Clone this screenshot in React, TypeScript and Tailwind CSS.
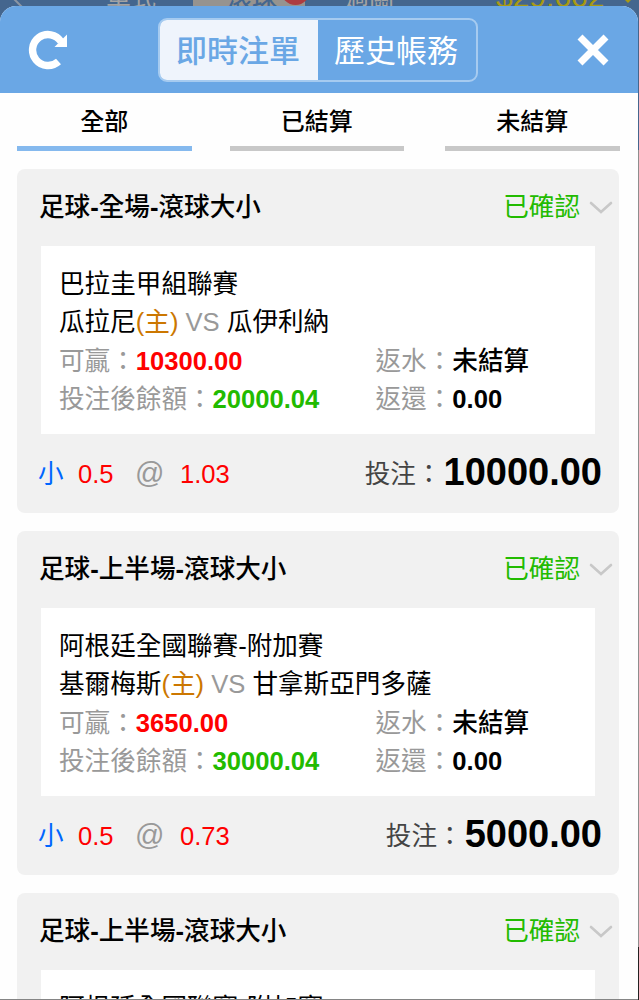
import { useState } from "react";

type Bet = {
  title: string;
  league: string;
  home: string;
  away: string;
  win: string;
  balance: string;
  odds: string;
  stake: string;
};

const bets: Bet[] = [
  { title: "足球-全場-滾球大小", league: "巴拉圭甲組聯賽", home: "瓜拉尼", away: "瓜伊利納", win: "10300.00", balance: "20000.04", odds: "1.03", stake: "10000.00" },
  { title: "足球-上半場-滾球大小", league: "阿根廷全國聯賽-附加賽", home: "基爾梅斯", away: "甘拿斯亞門多薩", win: "3650.00", balance: "30000.04", odds: "0.73", stake: "5000.00" },
  { title: "足球-上半場-滾球大小", league: "阿根廷全國聯賽-附加賽", home: "基爾梅斯", away: "甘拿斯亞門多薩", win: "3650.00", balance: "30000.04", odds: "0.73", stake: "5000.00" },
];

const tabs = ["全部", "已結算", "未結算"];

function Backdrop() {
  return (
    <div className="absolute inset-0 flex flex-col bg-[#8e8e8e]">
      <div className="relative h-[150px] shrink-0 overflow-hidden bg-[#44668e] text-[25px] leading-[30px] text-[#a3a3a3]">
        <svg className="absolute left-[12px] top-0 h-[6px] w-[12px]" viewBox="0 0 12 6" stroke="#8c96a3" strokeWidth="2">
          <path d="M2 -1 L10 7" />
        </svg>
        <span className="absolute left-[106px] top-[-17px]">單式</span>
        <span className="absolute left-[193px] top-[-10px] h-[40px] w-[112px] bg-[#96938f]" />
        <span className="absolute left-[227px] top-[-17px] font-medium text-[#44668e]">滾球</span>
        <span className="absolute left-[281px] top-[-24px] h-[29px] w-[29px] rounded-full bg-[#ad3c40]" />
        <span className="absolute left-[344px] top-[-17px]">過關</span>
        <span className="absolute left-[496px] top-[-18px] text-[30px] text-[#a99a12]">$29,662</span>
        <svg className="absolute left-[624px] top-0 h-[4px] w-[8px]" viewBox="0 0 8 4" fill="#a99a12">
          <path d="M1 0 H7 L4 3 Z" />
        </svg>
      </div>
      <div className="flex-1" />
      <div className="h-[53px] bg-[#222]" />
    </div>
  );
}

// the dashes are heavier than the text around them
function Title({ text }: { text: string }) {
  return (
    <p className="font-medium">
      {text.split("-").map((part, i) => (
        <span key={i}>{i > 0 && <b>-</b>}{part}</span>
      ))}
    </p>
  );
}

function BetCard({ bet }: { bet: Bet }) {
  return (
    <div className="h-[344.5px] shrink-0 rounded-[8px] bg-[#f1f1f1] px-[24px]">
      <div className="-ml-[2px] -mr-[18px] flex h-[77px] items-center justify-between">
        <Title text={bet.title} />
        <div className="flex items-center gap-[9px] text-[#22bb00]">
          <span>已確認</span>
          <svg className="h-[14px] w-[24px]" viewBox="0 0 24 14" fill="none" stroke="#c8c8c8" strokeWidth="2.6" strokeLinecap="round">
            <path d="M2 3 L12 12 L22 3" />
          </svg>
        </div>
      </div>

      <div className="h-[188.5px] bg-white px-[18px] pt-[19.5px] leading-[38.4px]">
        <p>{bet.league}</p>
        <p>
          {bet.home}
          <span className="text-[#cc7700]">(主)</span>
          <span className="text-[#999]"> VS </span>
          {bet.away}
        </p>
        <div className="flex text-[#999]">
          <p className="w-[316.5px]">可贏：<b className="text-[#ff0000]">{bet.win}</b></p>
          <p>返水：<b className="font-medium text-black">未結算</b></p>
        </div>
        <div className="flex text-[#999]">
          <p className="w-[316.5px]">投注後餘額：<b className="text-[#22bb00]">{bet.balance}</b></p>
          <p>返還：<b className="text-black">0.00</b></p>
        </div>
      </div>

      <div className="-ml-[3px] -mr-[7px] flex h-[78px] items-center justify-between">
        <div className="flex items-center pt-[2px] text-[#ff0000]">
          <span className="w-[40px] text-[#0066ff]">小</span>
          <span className="w-[57px]">0.5</span>
          <span className="w-[45px] text-[29px] leading-none text-[#999]">@</span>
          <span>{bet.odds}</span>
        </div>
        <p className="flex items-center text-[#444]">
          <span className="mr-[2px] pt-[2px]">投注：</span>
          <b className="-mt-[2px] text-[38px] text-black">{bet.stake}</b>
        </p>
      </div>
    </div>
  );
}

function App() {
  const [page, setPage] = useState(0);
  const [tab, setTab] = useState(0);

  return (
    <div className="relative h-[1000px] w-[639px] overflow-hidden font-['Liberation_Sans','Noto_Sans_CJK_TC',sans-serif] text-[25.6px] text-black">
      <Backdrop />
      <div className="absolute left-0 top-[6px] flex h-[994px] w-[637.5px] flex-col overflow-hidden rounded-t-[16px] border-b border-[#858585] bg-[#fefefe]">
        <div className="flex h-[87px] shrink-0 items-center bg-[#6aa7e5] pl-[28px] pr-[29px] text-white">
          <button>
            <svg className="h-[40px] w-[40px]" viewBox="0 0 40 40" fill="none">
              <path d="M30.5 31.5 A15.5 15.5 0 1 1 33 11.5" stroke="white" strokeWidth="7.4" />
              <path d="M39 4.5 V17 H26.5 Z" fill="white" />
            </svg>
          </button>
          <div className="ml-[90px] mr-auto flex h-[64px] w-[320px] overflow-hidden rounded-[9px] border-2 border-[#a6cbf0] text-[31px]">
            <button className={page == 0 ? "flex-1 bg-[#eff4fc] pr-[2px] pt-[5px] font-medium text-[#6aa7e5]" : "flex-1 pt-[5px]"} onClick={() => setPage(0)}>即時注單</button>
            <button className={page == 1 ? "flex-1 bg-[#eff4fc] pt-[5px] font-medium text-[#6aa7e5]" : "flex-1 pr-[2px] pt-[5px]"} onClick={() => setPage(1)}>歷史帳務</button>
          </div>
          <button>
            <svg className="h-[32px] w-[32px]" viewBox="0 0 32 32" fill="none" stroke="white" strokeWidth="7">
              <path d="M3 3 L29 29 M29 3 L3 29" />
            </svg>
          </button>
        </div>

        <div className="flex h-[58px] shrink-0 pl-[17px] text-[24px] font-medium">
          {tabs.map((t, i) => (
            <button
              key={t}
              className={i == tab ? "mr-[38px] w-[174.5px] shrink-0 border-b-[5px] border-[#85b9ee] pt-[4px]" : "mr-[41px] w-[174.5px] shrink-0 border-b-[5px] border-[#c8c8c8] pt-[4px]"}
              onClick={() => setTab(i)}
            >
              {t}
            </button>
          ))}
        </div>

        <div className="flex flex-col gap-[17.5px] pl-[17px] pr-[18.5px] pt-[17.5px]">
          {bets.map((b, i) => <BetCard key={i} bet={b} />)}
        </div>
      </div>
    </div>
  );
}

export default App;
